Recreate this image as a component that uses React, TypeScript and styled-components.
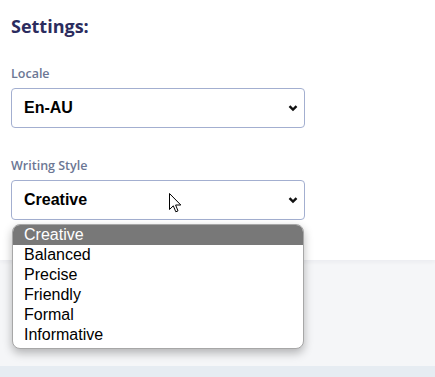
import React from "react";
import styled, { createGlobalStyle } from "styled-components";

const GlobalStyle = createGlobalStyle`
  html, body {
    margin: 0;
    padding: 0;
    background: #f5f6f8;
  }
  #root {
    min-height: 377px;
  }
`;

const Page = styled.div`
  position: relative;
  height: 377px;
  display: flex;
  flex-direction: column;
  background: #f5f6f8;
  overflow: hidden;
`;

const Card = styled.section`
  height: 260px;
  box-sizing: border-box;
  padding: 14px 11px 0;
  background: #ffffff;
  box-shadow: 0 2px 4px rgba(30, 40, 70, 0.05);
  font-family: "Open Sans", "Noto Sans", sans-serif;
`;

const Title = styled.h2`
  margin: 0 0 27px;
  font-size: 18px;
  line-height: 24px;
  font-weight: 700;
  color: #2b2c5e;
`;

const Field = styled.div`
  position: relative;
  display: flex;
  flex-direction: column;
  gap: 6px;
  width: 294px;
  margin-bottom: 29px;
`;

const Label = styled.label`
  font-size: 12.5px;
  line-height: 17px;
  font-weight: 600;
  color: #6c7794;
`;

const Select = styled.div`
  display: flex;
  align-items: center;
  justify-content: space-between;
  box-sizing: border-box;
  height: 40px;
  padding: 0 6px 0 12px;
  border: 1px solid #a3afd0;
  border-radius: 4px;
  background: #fff;
  font-family: "Liberation Sans", Arial, sans-serif;
  font-size: 16px;
  font-weight: 700;
  color: #000;
`;

const Chevron = () => (
  <svg width="10" height="10" viewBox="0 0 10 10">
    <path d="M1.5 3.2 L5 6.6 L8.5 3.2" fill="none" stroke="#111" strokeWidth="2.4" />
  </svg>
);

const Options = styled.ul`
  position: absolute;
  top: 67px;
  left: 1px;
  width: 292px;
  box-sizing: border-box;
  margin: 0;
  padding: 0 0 3px;
  list-style: none;
  background: #fff;
  border: 1px solid #a7a7a7;
  border-radius: 8px;
  overflow: hidden;
  box-shadow: 0 4px 10px rgba(0, 0, 0, 0.28);
  font-family: "Liberation Sans", Arial, sans-serif;
  z-index: 2;
`;

const Option = styled.li<{ $active?: boolean }>`
  height: 20px;
  line-height: 19px;
  padding-left: 11px;
  font-size: 16px;
  color: ${(p) => (p.$active ? "#fff" : "#000")};
  background: ${(p) => (p.$active ? "#787878" : "transparent")};
`;

const Spacer = styled.div`
  flex: 1;
`;

const BottomStrip = styled.div`
  height: 11px;
  background: #e6ecf2;
`;

const Cursor = styled.svg`
  position: absolute;
  left: 169px;
  top: 193px;
  z-index: 3;
`;

const styles = ["Creative", "Balanced", "Precise", "Friendly", "Formal", "Informative"];

export default function App() {
  return (
    <>
      <GlobalStyle />
      <Page>
        <Card>
          <Title>Settings:</Title>
          <Field>
            <Label>Locale</Label>
            <Select>
              <span>En-AU</span>
              <Chevron />
            </Select>
          </Field>
          <Field>
            <Label>Writing Style</Label>
            <Select>
              <span>Creative</span>
              <Chevron />
            </Select>
            <Options>
              {styles.map((s, i) => (
                <Option key={s} $active={i === 0}>
                  {s}
                </Option>
              ))}
            </Options>
          </Field>
        </Card>
        <Spacer />
        <BottomStrip />
        <Cursor width="13" height="21" viewBox="0 0 13 21">
          <path
            d="M0.5 0.5 L0.5 16.5 L4.3 12.8 L6.8 18.8 L9 17.9 L6.6 12 L11.8 12 Z"
            fill="#fff"
            stroke="#000"
            strokeWidth="1"
            strokeLinejoin="miter"
          />
        </Cursor>
      </Page>
    </>
  );
}
